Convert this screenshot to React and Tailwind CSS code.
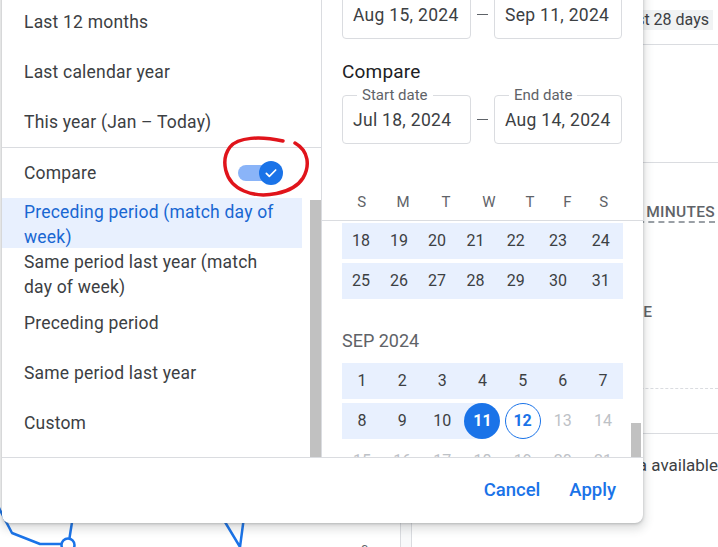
import React from "react";

const augCols = "grid-cols-[38px_38px_38px_39px_41.5px_43px_42.5px]";
const headCols = "grid-cols-[39.5px_43px_43px_43px_39px_36px_36.5px]";

function Field({ width, value, label }) {
  return (
    <div
      className={`relative h-[49px] border border-[#dadce0] rounded-[4px] flex items-center pl-[10px] text-[17.5px] tracking-[0.3px] text-[#3c4043] ${width}`}
    >
      {label && (
        <span className="absolute top-[-10px] left-[14px] px-[5px] bg-white text-[15px] tracking-normal leading-[18px] text-[#5f6368]">
          {label}
        </span>
      )}
      <span className="mt-[1px]">{value}</span>
    </div>
  );
}

function Dash() {
  return (
    <div className="w-[23px] flex justify-center">
      <div className="w-[11px] h-px bg-[#5f6368]" />
    </div>
  );
}

function Toggle() {
  return (
    <div className="relative w-[45px] h-[24px]">
      <div className="absolute left-0 top-[4px] w-[40px] h-[16px] rounded-full bg-[#8ab4f8]" />
      <div className="absolute right-0 top-0 w-[24px] h-[24px] rounded-full bg-[#1a73e8] flex items-center justify-center">
        <svg width="16" height="16" viewBox="0 0 24 24" fill="none">
          <path d="M5 12.5l4.5 4.5L19 7.5" stroke="white" strokeWidth="2.6" strokeLinecap="round" strokeLinejoin="round" />
        </svg>
      </div>
    </div>
  );
}

function LeftPanel() {
  const top = ["Last 12 months", "Last calendar year", "This year (Jan – Today)"];
  const rest = ["Preceding period", "Same period last year", "Custom"];
  return (
    <div className="w-[320px] border-r border-[#dadce0] flex flex-col text-[17.5px] tracking-[0.2px] text-[#3c4043]">
      <div className="pt-[7px]">
        {top.map((t) => (
          <div key={t} className="h-[50px] flex items-center pl-[22px]">
            {t}
          </div>
        ))}
      </div>
      <div className="border-t border-[#dadce0]" />
      <div className="h-[50px] flex items-center justify-between pl-[22px] pr-[38px]">
        <span>Compare</span>
        <Toggle />
      </div>
      <div className="flex flex-1 min-h-0">
        <div className="w-[300px] leading-[25px]">
          <div className="h-[50px] flex items-center pl-[22px] pr-[18px] pt-[3px] bg-[#e8f0fe] text-[#1967d2]">
            Preceding period (match day of week)
          </div>
          <div className="h-[50px] flex items-center pl-[22px] pr-[30px] pt-[3px]">
            Same period last year (match day of week)
          </div>
          {rest.map((t) => (
            <div key={t} className="h-[50px] flex items-center pl-[22px]">
              {t}
            </div>
          ))}
        </div>
        <div className="ml-[8px] w-[11px] mt-[2px] bg-[#c1c1c1]" />
      </div>
    </div>
  );
}

function AugRow({ days }) {
  return (
    <div className={`grid ${augCols} h-[36px] items-center bg-[#e8f0fe] text-center`}>
      {days.map((d) => (
        <span key={d}>{d}</span>
      ))}
    </div>
  );
}

function RightPanel() {
  return (
    <div className="flex-1 flex flex-col">
      <div className="px-[20px]">
        <div className="flex items-center">
          <Field width="w-[129px]" value="Aug 15, 2024" />
          <Dash />
          <Field width="w-[128px]" value="Sep 11, 2024" />
        </div>
        <div className="mt-[21px] h-[24px] leading-[24px] text-[19px] tracking-[0.2px] text-[#202124]">Compare</div>
        <div className="mt-[11px] flex items-center">
          <Field width="w-[129px]" value="Jul 18, 2024" label="Start date" />
          <Dash />
          <Field width="w-[128px]" value="Aug 14, 2024" label="End date" />
        </div>
      </div>
      <div className="mt-[40px] h-[37px] border-b border-[#dadce0] px-[20px]">
        <div className={`grid ${headCols} h-[36px] items-center text-center text-[15px] text-[#5f6368]`}>
          {["S", "M", "T", "W", "T", "F", "S"].map((d, i) => (
            <span key={i}>{d}</span>
          ))}
        </div>
      </div>
      <div className="flex-1 min-h-0 flex overflow-hidden">
        <div className="flex-1 pl-[20px] pr-[8px] pt-[2px] text-[16px] text-[#3c4043]">
          <AugRow days={[18, 19, 20, 21, 22, 23, 24]} />
          <div className="mt-[4px]">
            <AugRow days={[25, 26, 27, 28, 29, 30, 31]} />
          </div>
          <div className="mt-[30px] mb-[10px] h-[24px] leading-[24px] text-[18px] text-[#5f6368]">SEP 2024</div>
          <div className="grid grid-cols-7 h-[36px] items-center bg-[#e8f0fe] text-center">
            {[1, 2, 3, 4, 5, 6, 7].map((d) => (
              <span key={d}>{d}</span>
            ))}
          </div>
          <div className="mt-[4px] grid grid-cols-7 h-[36px] items-center text-center">
            {[8, 9, 10].map((d) => (
              <div key={d} className="h-[36px] flex items-center justify-center bg-[#e8f0fe]">
                {d}
              </div>
            ))}
            <div className="h-[36px] flex items-center justify-center bg-[linear-gradient(to_right,#e8f0fe_50%,transparent_50%)]">
              <div className="w-[36px] h-[36px] rounded-full bg-[#1a73e8] text-white font-bold flex items-center justify-center">
                11
              </div>
            </div>
            <div className="h-[36px] flex items-center justify-center">
              <div className="w-[36px] h-[36px] rounded-full border border-[#1a73e8] text-[#1a73e8] font-bold flex items-center justify-center">
                12
              </div>
            </div>
            <span className="text-[#bdc1c6]">13</span>
            <span className="text-[#bdc1c6]">14</span>
          </div>
          <div className="mt-[4px] grid grid-cols-7 h-[36px] items-center text-center text-[#bdc1c6]">
            {[15, 16, 17, 18, 19, 20, 21].map((d) => (
              <span key={d}>{d}</span>
            ))}
          </div>
        </div>
        <div className="w-[10px] mr-[2px]">
          <div className="mt-[202px] h-[34px] bg-[#c1c1c1]" />
        </div>
      </div>
    </div>
  );
}

function Background() {
  return (
    <div className="absolute inset-0 flex">
      <div className="w-[400px] flex flex-col justify-end">
        <svg width="400" height="60" viewBox="0 0 400 60">
          <polyline points="-4,14 0,23 12,46 40,57 62,57" fill="none" stroke="#1a73e8" strokeWidth="2.5" strokeLinejoin="round" />
          <line x1="69.5" y1="51" x2="76" y2="10" stroke="#1a73e8" strokeWidth="2.5" />
          <circle cx="68" cy="58" r="6.5" fill="white" stroke="#1a73e8" strokeWidth="2.5" />
          <polyline points="214,18 222,30 240,60 244,30 246,15" fill="none" stroke="#1a73e8" strokeWidth="2.5" strokeLinejoin="round" />
          <text x="361" y="67" fontSize="13" fill="#5f6368" fontFamily="Roboto, sans-serif">0</text>
        </svg>
      </div>
      <div className="w-[18px] bg-[#f8f9fa] border-x border-[#dadce0]" />
      <div className="flex-1 flex flex-col">
        <div className="mt-[10px] mr-[5px] self-end h-[20px] leading-[20px] pl-[6px] pr-[4px] bg-[#f1f3f4] text-[16px] text-[#3c4043] whitespace-nowrap">
          Last 28 days
        </div>
        <div className="mt-[14px] border-t border-[#dadce0]" />
        <div className="mt-[117px] border-t border-[#dadce0]" />
        <div className="mt-[40px] flex justify-end pr-[3px]">
          <span className="h-[20px] leading-[18px] text-[15.5px] font-medium tracking-[0.3px] text-[#5f6368] border-b-2 border-dashed border-[#9aa0a6] whitespace-nowrap">
            ENGAGEMENT MINUTES
          </span>
        </div>
        <div className="mt-[79px] flex justify-end pr-[66px] h-[20px] leading-[20px] text-[15.5px] font-medium text-[#5f6368] whitespace-nowrap">
          AVERAGE
        </div>
        <div className="mt-[66px] border-t border-dashed border-[#dadce0]" />
        <div className="mt-[44px] border-t border-[#dadce0]" />
        <div className="mt-[19px] pl-[175px] h-[24px] leading-[24px] text-[17px] text-[#3c4043] whitespace-nowrap">
          No data available
        </div>
      </div>
    </div>
  );
}

export default function App() {
  return (
    <div className="relative w-[718px] h-[547px] overflow-hidden bg-white font-[family-name:Roboto,'Noto_Sans',sans-serif]">
      <Background />
      <div className="absolute left-[2px] top-[-10px] w-[641px] h-[533px] bg-white rounded-b-[8px] shadow-[0_1px_3px_rgba(60,64,67,0.3),0_4px_8px_3px_rgba(60,64,67,0.15)] flex flex-col overflow-hidden">
        <div className="flex h-[467px]">
          <LeftPanel />
          <RightPanel />
        </div>
        <div className="flex-1 border-t border-[#dadce0] flex items-center justify-end pr-[27px] gap-[29px] text-[18.5px] font-medium text-[#1a73e8]">
          <span>Cancel</span>
          <span>Apply</span>
        </div>
      </div>
      <svg className="absolute inset-0 pointer-events-none" width="718" height="547" viewBox="0 0 718 547">
        <path
          d="M283 141 C260 136, 238 137, 230 147 C221 159, 223 182, 244 191 C262 199, 293 194, 303 178 C310 166, 309 151, 295 143"
          fill="none"
          stroke="#e0141b"
          strokeWidth="3.5"
          strokeLinecap="round"
        />
      </svg>
    </div>
  );
}
